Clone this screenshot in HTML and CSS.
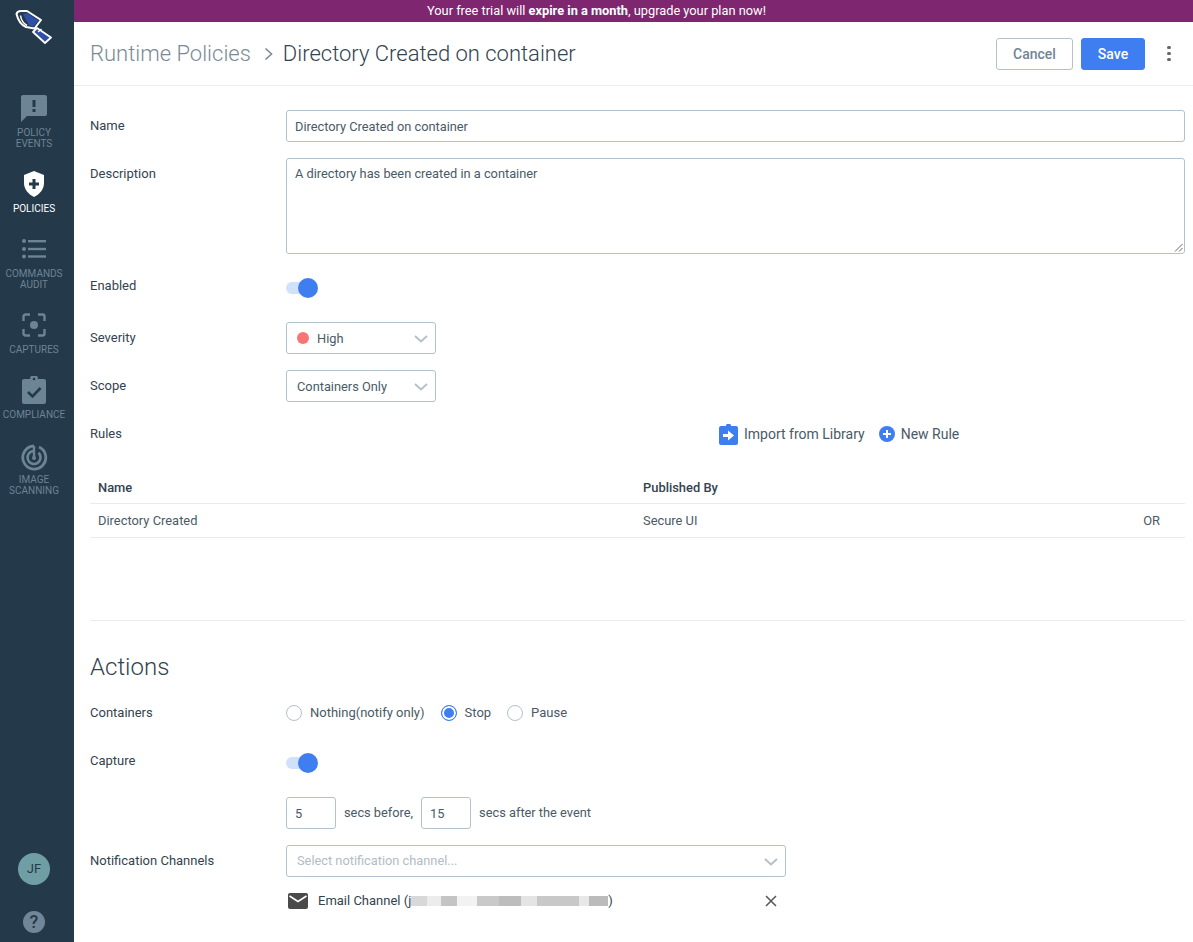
FILE: index.html
```html
<!DOCTYPE html>
<html lang="en">
<head>
  <meta charset="UTF-8">
  <title>Runtime Policies</title>
  <link rel="stylesheet" href="styles.css">
</head>
<body>
  <div class="app">
    <nav class="sidebar">
      <a class="logo">
        <svg width="74" height="44" viewBox="0 0 74 44">
          <path d="M37 28L51 37.500L45 43L33 32Z" fill="#2f4fa8" stroke="#fff" stroke-width="1.800" stroke-linejoin="round"/>
          <path d="M16.500 14C17 12 19 11 21 11L27 11L41 20L34.500 28.500L26 27C21 25 18 20 16.500 14Z" fill="#24394a" stroke="#fff" stroke-width="2" stroke-linejoin="round"/>
          <path d="M23 14L27 13L38.500 20.500L33.500 26.500L29 25.500Z" fill="#2f4fa8"/>
          <path d="M20.500 15.500C21 19 23.500 23.500 27 25.500" fill="none" stroke="#fff" stroke-width="1.500"/>
          <path d="M38 32L41.500 29" fill="none" stroke="#fff" stroke-width="1.400"/>
        </svg>
      </a>
      <a class="nav-item first">
        <svg width="28" height="28" viewBox="0 0 28 28"><path d="M3 1h22a2 2 0 0 1 2 2v17a2 2 0 0 1-2 2H7l-6 6V3a2 2 0 0 1 2-2z" fill="#6d8494"/><rect x="12.500" y="6" width="3" height="7" fill="#24394a"/><rect x="12.500" y="15" width="3" height="3" fill="#24394a"/></svg>
        <span>POLICY<br>EVENTS</span>
      </a>
      <a class="nav-item active">
        <svg width="28" height="28" viewBox="-3 -1 28 28"><path d="M11 0l10 4v8c0 6-4 11-10 14C5 23 1 18 1 12V4z" fill="#fff"/><path d="M9.500 8h3v3.500H16v3h-3.500V18h-3v-3.500H6v-3h3.500z" fill="#24394a"/></svg>
        <span>POLICIES</span>
      </a>
      <a class="nav-item">
        <svg width="28" height="28" viewBox="-2 -4 28 28"><g fill="#6d8494"><circle cx="2" cy="2" r="2"/><circle cx="2" cy="10" r="2"/><circle cx="2" cy="17.500" r="2"/><rect x="6" y="1" width="18" height="2.400"/><rect x="6" y="8.800" width="18" height="2.400"/><rect x="6" y="16.300" width="18" height="2.400"/></g></svg>
        <span>COMMANDS<br>AUDIT</span>
      </a>
      <a class="nav-item">
        <svg width="28" height="28" viewBox="-2 -2 28 28"><path d="M1.500 8V3.500a2 2 0 0 1 2-2H8M16 1.500h4.500a2 2 0 0 1 2 2V8M22.500 16v4.500a2 2 0 0 1-2 2H16M8 22.500H3.500a2 2 0 0 1-2-2V16" fill="none" stroke="#6d8494" stroke-width="2.400"/><circle cx="12" cy="12" r="4" fill="#6d8494"/></svg>
        <span>CAPTURES</span>
      </a>
      <a class="nav-item">
        <svg width="28" height="28" viewBox="-2 0 28 28"><path d="M2 3h6a4 4 0 0 1 8 0h6a2 2 0 0 1 2 2v21a2 2 0 0 1-2 2H2a2 2 0 0 1-2-2V5a2 2 0 0 1 2-2z" fill="#6d8494"/><circle cx="12" cy="3" r="1.300" fill="#24394a"/><path d="M6 16l4.500 4.500L18.500 12" fill="none" stroke="#24394a" stroke-width="2.600"/></svg>
        <span>COMPLIANCE</span>
      </a>
      <a class="nav-item scan">
        <svg width="28" height="28" viewBox="-1 -1 28 28" fill="none" stroke="#6d8494"><path d="M18 3A11.500 11.500 0 1 1 13 2" stroke-width="2.800"/><path d="M17.500 8.800A6.500 6.500 0 1 1 13 7" stroke-width="2.600"/><path d="M13 2V14" stroke-width="2.400"/><circle cx="13" cy="14" r="2" fill="#6d8494" stroke="none"/></svg>
        <span>IMAGE<br>SCANNING</span>
      </a>
      <div class="sidebar-bottom">
        <div class="avatar">JF</div>
        <div class="help">?</div>
      </div>
    </nav>

    <div class="main">
      <div class="trial">Your free trial will <b>expire in a month</b>, upgrade your plan now!</div>

      <header class="topbar">
        <div class="crumbs">
          <span class="crumb-parent">Runtime Policies</span>
          <svg class="crumb-sep" width="9" height="14" viewBox="0 0 9 14"><path d="M1.500 1.500L7.500 7l-6 5.500" fill="none" stroke="#7b8a96" stroke-width="1.600"/></svg>
          <span class="crumb-current">Directory Created on container</span>
        </div>
        <div class="top-actions">
          <button class="btn btn-cancel">Cancel</button>
          <button class="btn btn-save">Save</button>
          <div class="kebab"><i></i><i></i><i></i></div>
        </div>
      </header>

      <form class="policy-form">
        <div class="row row-name">
          <label>Name</label>
          <div class="text-input">Directory Created on container</div>
        </div>
        <div class="row row-desc">
          <label>Description</label>
          <div class="text-input textarea">
            A directory has been created in a container
            <svg class="grip" width="9" height="9" viewBox="0 0 9 9"><path d="M8.500 1L1 8.500M8.500 5L5 8.500" stroke="#666" stroke-width="1"/></svg>
          </div>
        </div>
        <div class="row row-enabled">
          <label>Enabled</label>
          <div class="toggle"><i></i></div>
        </div>
        <div class="row row-severity">
          <label>Severity</label>
          <div class="select">
            <span class="dot"></span>High
            <svg class="chev" width="14" height="8" viewBox="0 0 14 8"><path d="M1 1l6 5.500L13 1" fill="none" stroke="#b3c1ca" stroke-width="2"/></svg>
          </div>
        </div>
        <div class="row row-scope">
          <label>Scope</label>
          <div class="select">
            Containers Only
            <svg class="chev" width="14" height="8" viewBox="0 0 14 8"><path d="M1 1l6 5.500L13 1" fill="none" stroke="#b3c1ca" stroke-width="2"/></svg>
          </div>
        </div>
        <div class="row row-rules">
          <label>Rules</label>
          <div class="rule-links">
            <a class="rule-link">
              <svg width="19" height="21" viewBox="0 0 19 21"><path d="M2 2h5a2.500 2.500 0 0 1 5 0h5a2 2 0 0 1 2 2v15a2 2 0 0 1-2 2H2a2 2 0 0 1-2-2V4a2 2 0 0 1 2-2z" fill="#3f7ef0"/><path d="M4 10h5V6.500l6 5-6 5V13H4z" fill="#fff"/></svg>
              Import from Library
            </a>
            <a class="rule-link">
              <svg width="16" height="16" viewBox="0 0 16 16"><circle cx="8" cy="8" r="8" fill="#3f7ef0"/><path d="M7 4h2v3h3v2H9v3H7V9H4V7h3z" fill="#fff"/></svg>
              New Rule
            </a>
          </div>
        </div>

        <table class="rules">
          <thead>
            <tr><th class="col-name">Name</th><th>Published By</th><th></th></tr>
          </thead>
          <tbody>
            <tr><td>Directory Created</td><td>Secure UI</td><td class="col-or">OR</td></tr>
          </tbody>
        </table>

        <hr class="divider">

        <h2 class="section">Actions</h2>

        <div class="row row-containers">
          <label>Containers</label>
          <div class="radios">
            <span class="radio"><i></i>Nothing(notify only)</span>
            <span class="radio on"><i></i>Stop</span>
            <span class="radio"><i></i>Pause</span>
          </div>
        </div>
        <div class="row row-capture">
          <label>Capture</label>
          <div class="toggle"><i></i></div>
        </div>
        <div class="row row-secs">
          <label></label>
          <div class="secs">
            <div class="small-input">5</div>
            <span>secs before,</span>
            <div class="small-input">15</div>
            <span>secs after the event</span>
          </div>
        </div>
        <div class="row row-channels">
          <label>Notification Channels</label>
          <div class="select wide">
            <span class="placeholder">Select notification channel...</span>
            <svg class="chev" width="14" height="8" viewBox="0 0 14 8"><path d="M1 1l6 5.500L13 1" fill="none" stroke="#b3c1ca" stroke-width="2"/></svg>
          </div>
        </div>
        <div class="row row-email">
          <label></label>
          <div class="channel">
            <svg width="20" height="16" viewBox="0 0 20 16"><rect width="20" height="16" rx="2" fill="#4a4a4a"/><path d="M1.500 3l8.500 5.500L18.500 3" fill="none" stroke="#fff" stroke-width="1.600"/></svg>
            <span class="channel-name">Email Channel (j<span class="blurred"></span>)</span>
            <svg class="close" width="12" height="12" viewBox="0 0 12 12"><path d="M1 1l10 10M11 1L1 11" stroke="#555" stroke-width="1.500"/></svg>
          </div>
        </div>
      </form>
    </div>
  </div>
</body>
</html>
```

FILE: styles.css
```css
* {
  box-sizing: border-box;
}

html, body {
  height: 100%;
  overflow: hidden;
}

body {
  margin: 0;
  font-family: Roboto, 'Liberation Sans', sans-serif;
  font-size: 13px;
  color: #4a5a66;
  background: #fff;
}

.app {
  display: flex;
  height: 942px;
}

/* left nav */
.sidebar {
  width: 74px;
  flex-shrink: 0;
  background: #24394a;
  display: flex;
  flex-direction: column;
}

.logo {
  height: 44px;
  display: block;
}

.logo svg {
  display: block;
}

.nav-item {
  width: 68px;
  display: flex;
  flex-direction: column;
  align-items: center;
  gap: 5px;
  color: #6d8494;
  font-size: 10px;
  line-height: 11px;
  text-align: center;
  margin-bottom: 21px;
}

.nav-item.first {
  margin-top: 50px;
}

.nav-item.active {
  color: #fff;
}

.nav-item.scan {
  margin-top: 2px;
  gap: 3px;
}

.sidebar-bottom {
  width: 68px;
  margin-top: auto;
  display: flex;
  flex-direction: column;
  align-items: center;
  gap: 26px;
  padding-bottom: 9px;
}

.avatar {
  width: 32px;
  height: 32px;
  border-radius: 50%;
  background: #6f9fa5;
  color: #24394a;
  font-size: 13px;
  line-height: 32px;
  text-align: center;
}

.help {
  width: 22px;
  height: 22px;
  border-radius: 50%;
  background: #72869a;
  color: #24394a;
  font-size: 18px;
  font-weight: 500;
  line-height: 22px;
  text-align: center;
}

/* main column */
.main {
  flex: 1;
  min-width: 0;
}

.trial {
  height: 22px;
  background: #7e2670;
  color: #fff;
  font-size: 12.800px;
  line-height: 21px;
  text-align: center;
  padding-right: 74px;
}

.trial b {
  font-weight: 700;
}

.topbar {
  height: 64px;
  border-bottom: 1px solid #ececec;
  display: flex;
  align-items: center;
  justify-content: space-between;
  padding: 0 16px;
}

.crumbs {
  display: flex;
  align-items: center;
  font-size: 22px;
  font-weight: 300;
}

.crumb-parent {
  color: #7b8a96;
}

.crumb-sep {
  margin: 0 10px 0 13px;
}

.crumb-current {
  color: #33434f;
}

.top-actions {
  display: flex;
  align-items: center;
  gap: 8px;
}

.btn {
  width: 77px;
  height: 32px;
  border-radius: 3px;
  font-family: inherit;
  font-size: 14px;
  font-weight: 500;
  padding: 0;
}

.btn-cancel {
  background: #fff;
  border: 1px solid #b3c1ca;
  color: #728594;
}

.btn-save {
  width: 64px;
  background: #3f7ef0;
  border: 1px solid #3f7ef0;
  color: #fff;
}

.kebab {
  display: flex;
  flex-direction: column;
  gap: 2.500px;
  margin: 0 6.500px 0 14px;
}

.kebab i {
  width: 3.500px;
  height: 3.500px;
  border-radius: 50%;
  background: #666;
}

/* form */
.policy-form {
  padding: 24px 8px 0 16px;
}

.row {
  display: flex;
  align-items: center;
}

.row > label {
  width: 196px;
  flex-shrink: 0;
  color: #33434f;
  font-size: 13px;
}

.row-name {
  height: 32px;
  margin-bottom: 16px;
}

.row-name > label {
  position: relative;
  top: -1px;
}

.row-desc {
  height: 96px;
  align-items: flex-start;
  margin-bottom: 24px;
}

.row-desc > label {
  padding-top: 8px;
}

.text-input {
  flex: 1;
  height: 32px;
  border: 1px solid #b3c1ca;
  border-radius: 3px;
  padding: 0 8px;
  line-height: 31px;
  font-size: 12.800px;
  color: #4a5a66;
}

.textarea {
  position: relative;
  height: 96px;
  line-height: 16px;
  padding-top: 7px;
}

.grip {
  position: absolute;
  right: 1px;
  bottom: 1px;
}

.toggle {
  position: relative;
  width: 32px;
  height: 20px;
}

.toggle::before {
  content: "";
  position: absolute;
  left: 0;
  top: 4px;
  width: 26px;
  height: 12px;
  border-radius: 6px;
  background: #cfe1fb;
}

.toggle i {
  position: absolute;
  right: 0;
  top: 0;
  width: 20px;
  height: 20px;
  border-radius: 50%;
  background: #3f7ef0;
}

.row-enabled {
  height: 20px;
  margin-bottom: 24px;
}

.row-enabled > label {
  position: relative;
  top: -3px;
}

.row-capture > label {
  position: relative;
  top: -2px;
}

.row-severity {
  height: 32px;
  margin-bottom: 16px;
}

.row-severity > label,
.row-scope > label {
  position: relative;
  top: -1px;
}

.row-scope {
  height: 32px;
  margin-bottom: 21px;
}

.select {
  position: relative;
  width: 150px;
  height: 32px;
  border: 1px solid #b3c1ca;
  border-radius: 3px;
  padding-left: 10px;
  display: flex;
  align-items: center;
  font-size: 12.800px;
  color: #4a5a66;
}

.select.wide {
  width: 500px;
}

.chev {
  position: absolute;
  right: 7px;
  top: 12px;
}

.dot {
  width: 12px;
  height: 12px;
  border-radius: 50%;
  background: #fb7474;
  margin-right: 8px;
}

.placeholder {
  color: #b3bcc3;
}

.row-rules {
  height: 20px;
  margin-bottom: 29px;
}

.rule-links {
  display: flex;
  align-items: center;
  gap: 14px;
  margin-left: 433px;
  padding-top: 2px;
}

.rule-link {
  display: flex;
  align-items: center;
  gap: 6px;
  font-size: 14px;
  color: #4a5a66;
}

.rules {
  width: 100%;
  border-collapse: collapse;
  table-layout: fixed;
}

.rules th, .rules td {
  height: 34px;
  padding: 0 8px;
  text-align: left;
  border-bottom: 1px solid #e9ecee;
  font-size: 12.900px;
}

.rules th {
  font-weight: 500;
  color: #33434f;
  height: 31px;
}

.rules .col-name {
  width: 545px;
}

.rules .col-or {
  text-align: right;
  padding-right: 25px;
}

.divider {
  border: 0;
  border-top: 1px solid #e9ecee;
  margin: 82px 0 0;
}

.section {
  margin: 30px 0 20px;
  font-size: 24px;
  font-weight: 300;
  line-height: 32px;
  color: #33434f;
}

.row-containers {
  height: 20px;
  margin-bottom: 30px;
}

.radios {
  display: flex;
  gap: 16px;
}

.radio {
  display: flex;
  align-items: center;
  gap: 8px;
}

.radio i {
  width: 16px;
  height: 16px;
  border-radius: 50%;
  border: 1px solid #b3c1ca;
}

.radio.on i {
  border-color: #3f7ef0;
  background: #3f7ef0;
  box-shadow: inset 0 0 0 2px #fff;
}

.row-capture {
  height: 20px;
  margin-bottom: 24px;
}

.row-secs {
  height: 32px;
  margin-bottom: 16px;
}

.secs {
  display: flex;
  align-items: center;
  gap: 8px;
  font-size: 12.800px;
}

.small-input {
  width: 50px;
  height: 32px;
  border: 1px solid #b3c1ca;
  border-radius: 3px;
  padding-left: 8px;
  line-height: 32px;
}

.row-channels {
  height: 32px;
  margin-bottom: 14px;
}

.row-email {
  height: 20px;
}

.channel {
  position: relative;
  width: 500px;
  display: flex;
  align-items: center;
  gap: 10px;
  padding-left: 2px;
}

.channel-name {
  color: #33434f;
}

.blurred {
  display: inline-block;
  width: 197px;
  height: 10px;
  vertical-align: -1px;
  background: linear-gradient(90deg, #d8d8d8 0 16px, #ececec 16px 30px, #c4c4c4 30px 46px, #f2f2f2 46px 66px, #c9c9c9 66px 88px, #bdbdbd 88px 110px, #e4e4e4 110px 126px, #c8c8c8 126px 168px, #e8e8e8 168px 178px, #bbb 178px 197px);
}

.close {
  position: absolute;
  right: 9px;
  top: 2px;
}
```
